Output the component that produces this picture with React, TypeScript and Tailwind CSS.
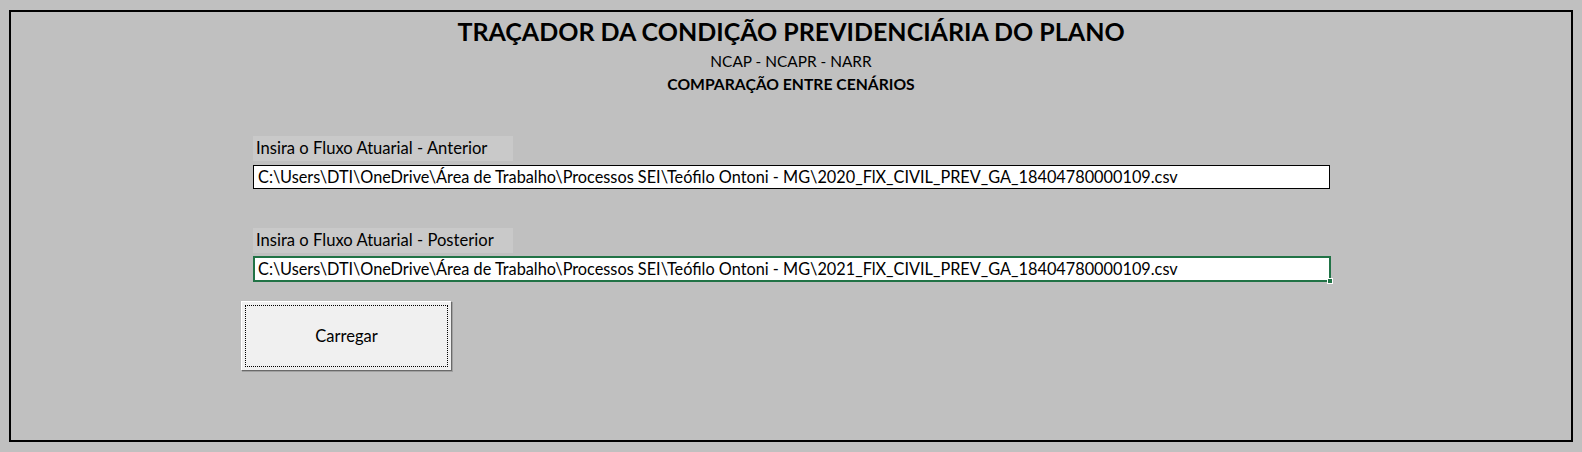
import React from 'react';

const font = { fontFamily: 'Lato, "Open Sans", sans-serif' };

const PathField: React.FC<{ label: string; value: string; active?: boolean }> = ({ label, value, active }) => (
  <div className="flex flex-col">
    <div className="w-[260px] h-[25px] bg-[#c9c9c9] pl-[3px] text-[16.6px] leading-[25px] text-black">{label}</div>
    {active ? (
      <div className="relative mt-[3px] w-[1078px] h-[26px] bg-white border-2 border-[#217346] pl-[3px] text-[16.3px] leading-[22px] text-black whitespace-nowrap">
        {value}
        <span className="absolute -right-[4px] -bottom-[4px] w-[6px] h-[6px] bg-[#217346] border border-white" />
      </div>
    ) : (
      <div className="mt-[4px] w-[1077px] h-[24px] bg-white border border-black pl-[4px] text-[16.3px] leading-[22px] text-black whitespace-nowrap">
        {value}
      </div>
    )}
  </div>
);

export default function App() {
  return (
    <div className="w-[1582px] h-[452px] bg-[#c0c0c0] pt-[10px] pl-[9px]" style={font}>
      <div className="w-[1564px] h-[432px] border-2 border-black">
        {/* Header */}
        <div className="flex flex-col items-center pt-[4px] text-black">
          <h1 className="text-[25px] font-bold leading-[30px]">TRAÇADOR DA CONDIÇÃO PREVIDENCIÁRIA DO PLANO</h1>
          <p className="text-[15.4px] leading-[19px] mt-[6px]">NCAP - NCAPR - NARR</p>
          <p className="text-[15.7px] font-bold leading-[19px] mt-[4px]">COMPARAÇÃO ENTRE CENÁRIOS</p>
        </div>

        <div className="pl-[242px] pt-[42px] flex flex-col">
          <PathField
            label="Insira o Fluxo Atuarial - Anterior"
            value="C:\Users\DTI\OneDrive\Área de Trabalho\Processos SEI\Teófilo Ontoni - MG\2020_FlX_CIVIL_PREV_GA_18404780000109.csv"
          />
          <div className="mt-[39px]">
            <PathField
              label="Insira o Fluxo Atuarial - Posterior"
              value="C:\Users\DTI\OneDrive\Área de Trabalho\Processos SEI\Teófilo Ontoni - MG\2021_FlX_CIVIL_PREV_GA_18404780000109.csv"
              active
            />
          </div>

          {/* Button */}
          <button className="ml-[-12px] mt-[19px] w-[211px] h-[70px] bg-[#f0f0f0] border border-t-white border-l-white border-r-[#696969] border-b-[#696969] shadow-[1px_1px_0_#a0a0a0] p-[3px]">
            <div className="w-full h-full border border-dotted border-black flex items-center justify-center text-[16.5px] text-black">
              Carregar
            </div>
          </button>
        </div>
      </div>
    </div>
  );
}
